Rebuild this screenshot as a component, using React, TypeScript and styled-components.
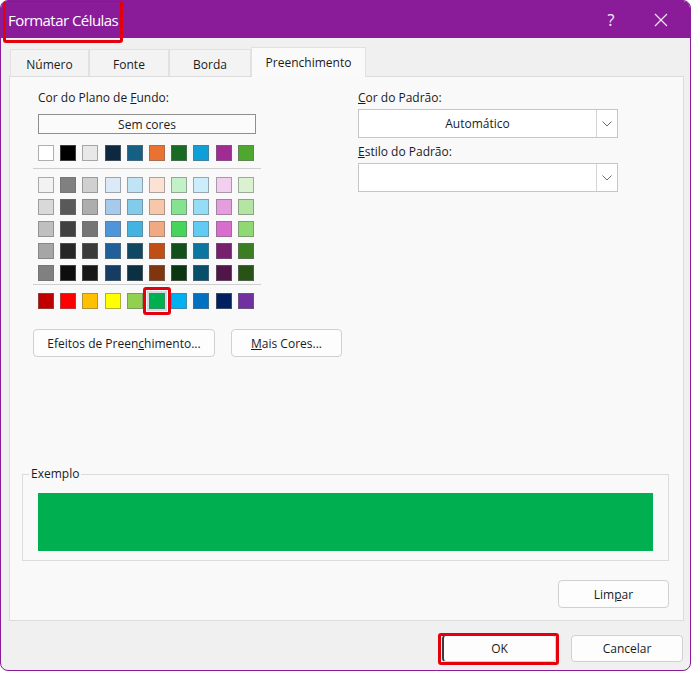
import React from "react";
import styled, { createGlobalStyle, css } from "styled-components";

const Global = createGlobalStyle`
  html, body { margin: 0; padding: 0; background: #ffffff; }
  body { font-family: "Open Sans", "Noto Sans", sans-serif; font-size: 12px; color: #1b1b1b; }
  * { box-sizing: border-box; }
`;

const annotated = css`
  position: relative;
  &::after {
    content: "";
    position: absolute;
    border: 3px solid #e5000e;
    border-radius: 3px;
    pointer-events: none;
  }
`;

const Window = styled.div`
  position: relative;
  width: 691px;
  height: 671px;
  border: 1px solid #8a1b99;
  border-radius: 8px;
  background: #f0f0f0;
  overflow: hidden;
  display: flex;
  flex-direction: column;
`;

const TitleBar = styled.div`
  height: 37px;
  flex: none;
  background: #8a1b99;
  color: #ffffff;
  display: flex;
  align-items: center;
  padding: 0 0 0 7px;
`;

const TitleText = styled.div`
  ${annotated}
  font-size: 15px;
  letter-spacing: -0.55px;
  &::after { inset: -11px -5px -13px -5px; }
`;

const TitleButtons = styled.div`
  margin-left: auto;
  padding-right: 4px;
  display: flex;
  align-items: center;
`;

const TitleButton = styled.div`
  width: 50px;
  height: 37px;
  display: flex;
  align-items: center;
  justify-content: center;
  color: #f2e4f4;
  font-size: 16px;
  font-family: "Noto Sans", sans-serif;
`;

const Body = styled.div`
  flex: 1;
  display: flex;
  flex-direction: column;
  padding: 9px 6px 0 8px;
`;

const TabStrip = styled.div`
  display: flex;
  align-items: flex-end;
  height: 29px;
  margin-left: 1px;
  position: relative;
  z-index: 1;
`;

const Tab = styled.div<{ $w: number; $active?: boolean }>`
  width: ${(p) => p.$w}px;
  height: ${(p) => (p.$active ? 30 : 27)}px;
  display: flex;
  align-items: center;
  justify-content: center;
  border: 1px solid #e1e1e1;
  border-bottom: none;
  margin-bottom: ${(p) => (p.$active ? -1 : 0)}px;
  background: ${(p) => (p.$active ? "#fafafa" : "#f3f3f3")};
  color: #1b1b1b;
  padding-top: ${(p) => (p.$active ? 0 : 2)}px;
  & + & { border-left: ${(p) => (p.$active ? "1px solid #e1e1e1" : "none")}; }
`;

const Panel = styled.div`
  height: 545px;
  border: 1px solid #dcdcdc;
  background: #f9f9f9;
  display: flex;
  flex-direction: column;
  padding: 13px 14px 12px 12px;
`;

const TopSection = styled.div`
  display: flex;
  margin-left: 11px;
`;

const LeftCol = styled.div`
  width: 228px;
  display: flex;
  flex-direction: column;
`;

const RightCol = styled.div`
  width: 260px;
  margin-left: 97px;
  display: flex;
  flex-direction: column;
`;

const Label = styled.div<{ $indent?: number; $top?: number }>`
  height: 16px;
  line-height: 16px;
  margin-left: ${(p) => p.$indent ?? 0}px;
  margin-top: ${(p) => p.$top ?? 0}px;
  white-space: nowrap;
`;

const NoColorButton = styled.div`
  margin: 8px 0 0 5px;
  width: 218px;
  height: 20px;
  border: 1px solid #8f8f8f;
  background: #fbfbfb;
  display: flex;
  align-items: center;
  justify-content: center;
`;

const SwatchRow = styled.div<{ $top: number }>`
  display: flex;
  gap: 6.2px;
  margin: ${(p) => p.$top}px 0 0 5px;
`;

const Swatch = styled.div<{ $selected?: boolean }>`
  width: 16px;
  height: 16px;
  flex: none;
  border: 1px solid rgba(110, 110, 110, 0.55);
  ${(p) =>
    p.$selected &&
    css`
      ${annotated}
      box-shadow: 0 0 0 2px #d3dbe4;
      &::after { inset: -7px -7px -7px -7px; }
    `}
`;

const Separator = styled.div<{ $top: number }>`
  height: 1px;
  background: #cfcfcf;
  margin-top: ${(p) => p.$top}px;
`;

const ButtonRow = styled.div`
  display: flex;
  gap: 16px;
  margin-top: 20px;
`;

const Button = styled.div<{ $w: number; $h?: number; $annotated?: boolean; $default?: boolean }>`
  width: ${(p) => p.$w}px;
  height: ${(p) => p.$h ?? 28}px;
  flex: none;
  display: flex;
  align-items: center;
  justify-content: center;
  background: #fdfdfd;
  border: 1px solid #d0d0d0;
  border-radius: 4px;
  color: #1b1b1b;
  white-space: nowrap;
  ${(p) =>
    p.$default &&
    css`
      border-left: 2px solid #3a3a3a;
    `}
  ${(p) =>
    p.$annotated &&
    css`
      ${annotated}
      &::after { inset: -3px -4px -4px -6px; }
    `}
`;

const Combo = styled.div`
  margin-top: 3px;
  height: 29px;
  border: 1px solid #c6c6c6;
  background: #ffffff;
  display: flex;
`;

const ComboValue = styled.div`
  flex: 1;
  display: flex;
  align-items: center;
  justify-content: center;
`;

const ComboArrow = styled.div`
  width: 21px;
  border-left: 1px solid #d4d4d4;
  display: flex;
  align-items: center;
  justify-content: center;
`;

const GroupBox = styled.div`
  position: relative;
  margin-top: 117px;
  height: 87px;
  border: 1px solid #dcdcdc;
  padding: 18px 15px 8px 15px;
`;

const GroupLabel = styled.span`
  position: absolute;
  top: -9px;
  left: 6px;
  padding: 0 2px 0 2px;
  line-height: 16px;
  background: #f9f9f9;
`;

const Preview = styled.div`
  height: 58px;
  background: #00b050;
`;

const ClearRow = styled.div`
  display: flex;
  justify-content: flex-end;
  margin-top: 19px;
`;

const Footer = styled.div`
  display: flex;
  justify-content: flex-end;
  gap: 15px;
  padding: 14px 1px 0 0;
`;

const Chevron = () => (
  <svg width="10" height="6" viewBox="0 0 10 6">
    <path d="M0.5 0.5 L5 5 L9.5 0.5" fill="none" stroke="#6b6b6b" strokeWidth="1" />
  </svg>
);

const CloseIcon = () => (
  <svg width="14" height="14" viewBox="0 0 14 14">
    <path d="M1 1 L13 13 M13 1 L1 13" stroke="#f4e8f5" strokeWidth="1.2" fill="none" />
  </svg>
);

const theme = ["#ffffff", "#000000", "#e8e8e8", "#0e2841", "#156082", "#e97132", "#196b24", "#0f9ed5", "#a02b93", "#4ea72e"];

const tints: string[][] = [
  ["#f2f2f2", "#808080", "#d0d0d0", "#dceaf7", "#c0e4f5", "#fbe2d5", "#c2f1c8", "#caeefb", "#f2ceef", "#daf2d0"],
  ["#d9d9d9", "#595959", "#adadad", "#a6c9ec", "#83cbeb", "#f7c7ac", "#84e291", "#95dcf7", "#e49edd", "#b4e5a2"],
  ["#bfbfbf", "#404040", "#757575", "#4e95d9", "#44b3e1", "#f1a983", "#47d45a", "#61cbf3", "#d86dcd", "#8ed973"],
  ["#a6a6a6", "#262626", "#3a3a3a", "#215f9a", "#104862", "#c04f15", "#124f1a", "#0b76a0", "#77206d", "#3b7d23"],
  ["#808080", "#0d0d0d", "#171717", "#153d64", "#0a3041", "#7f350e", "#0c3511", "#074f6a", "#501549", "#275317"],
];

const standard = ["#c00000", "#ff0000", "#ffc000", "#ffff00", "#92d050", "#00b050", "#00b0f0", "#0070c0", "#002060", "#7030a0"];

export default function App() {
  return (
    <>
      <Global />
      <Window>
        <TitleBar>
          <TitleText>Formatar Células</TitleText>
          <TitleButtons>
            <TitleButton>?</TitleButton>
            <TitleButton>
              <CloseIcon />
            </TitleButton>
          </TitleButtons>
        </TitleBar>
        <Body>
          <TabStrip>
            <Tab $w={79}>Número</Tab>
            <Tab $w={80}>Fonte</Tab>
            <Tab $w={82}>Borda</Tab>
            <Tab $w={115} $active>
              Preenchimento
            </Tab>
          </TabStrip>
          <Panel>
            <TopSection>
              <LeftCol>
                <Label $indent={5}>
                  Cor do Plano de <u>F</u>undo:
                </Label>
                <NoColorButton>Sem cores</NoColorButton>
                <SwatchRow $top={11}>
                  {theme.map((c) => (
                    <Swatch key={c} style={{ background: c }} />
                  ))}
                </SwatchRow>
                <Separator $top={7} />
                {tints.map((row, i) => (
                  <SwatchRow key={i} $top={i === 0 ? 8 : 6}>
                    {row.map((c, j) => (
                      <Swatch key={j} style={{ background: c }} />
                    ))}
                  </SwatchRow>
                ))}
                <Separator $top={3} />
                <SwatchRow $top={8}>
                  {standard.map((c, j) => (
                    <Swatch key={c} $selected={j === 5} style={{ background: c }} />
                  ))}
                </SwatchRow>
                <ButtonRow>
                  <Button $w={182}>
                    Efeitos de Preen<u>c</u>himento...
                  </Button>
                  <Button $w={111}>
                    <u>M</u>ais Cores...
                  </Button>
                </ButtonRow>
              </LeftCol>
              <RightCol>
                <Label>
                  <u>C</u>or do Padrão:
                </Label>
                <Combo>
                  <ComboValue>Automático</ComboValue>
                  <ComboArrow>
                    <Chevron />
                  </ComboArrow>
                </Combo>
                <Label $top={6}>
                  <u>E</u>stilo do Padrão:
                </Label>
                <Combo>
                  <ComboValue />
                  <ComboArrow>
                    <Chevron />
                  </ComboArrow>
                </Combo>
              </RightCol>
            </TopSection>
            <GroupBox>
              <GroupLabel>Exemplo</GroupLabel>
              <Preview />
            </GroupBox>
            <ClearRow>
              <Button $w={111}>
                Lim<u>p</u>ar
              </Button>
            </ClearRow>
          </Panel>
          <Footer>
            <Button $w={114} $h={27} $default $annotated>
              OK
            </Button>
            <Button $w={112} $h={27}>
              Cancelar
            </Button>
          </Footer>
        </Body>
      </Window>
    </>
  );
}
